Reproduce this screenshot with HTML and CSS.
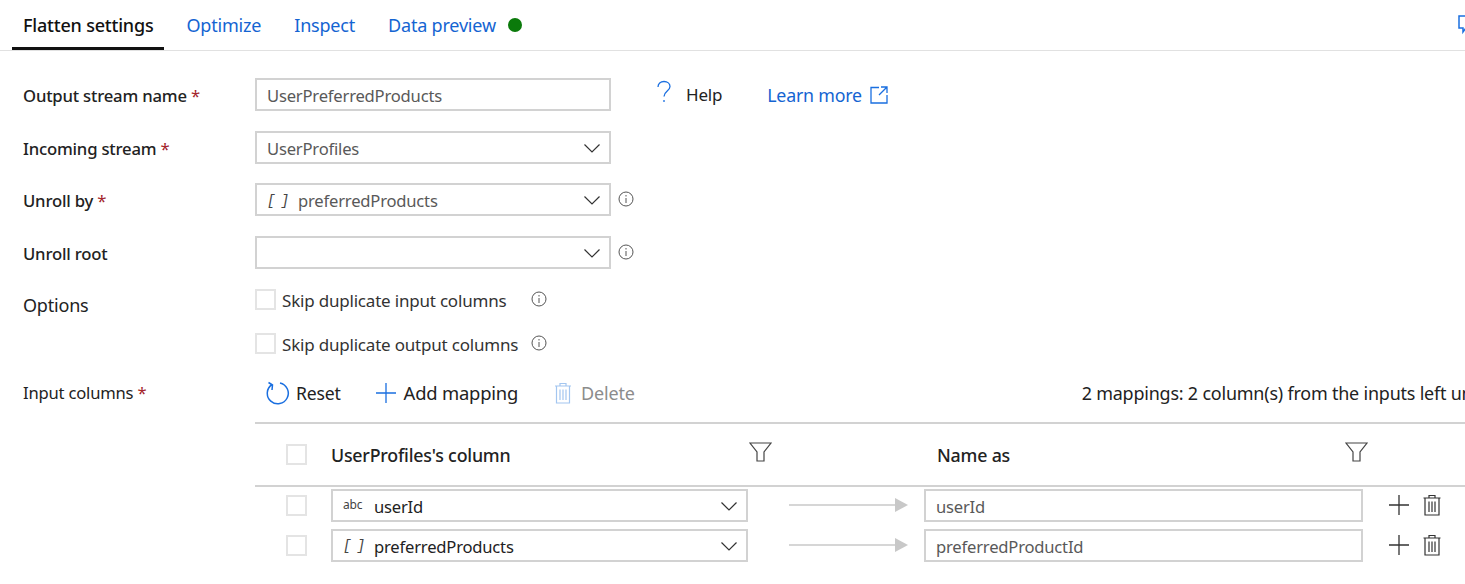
FILE: index.html
```html
<!DOCTYPE html>
<html>
<head>
	<title>Flatten settings</title>
	<link rel="stylesheet" href="styles.css">
</head>
<body>
<div class="tabs">
	<div class="tab active">Flatten settings</div>
	<div class="tab">Optimize</div>
	<div class="tab">Inspect</div>
	<div class="tab">Data preview <span class="dot"></span></div>
	<div class="feedback">
		<svg width="20" height="20" viewBox="0 0 20 20"><path d="M1 1H18V13H8L5 17V13H1Z" fill="none" stroke="#1a6fe0" stroke-width="1.5"/></svg>
	</div>
</div>

<div class="form">
	<div class="row">
		<div class="label bold">Output stream name <span class="req">*</span></div>
		<div class="field">UserPreferredProducts</div>
		<div class="help">
			<svg width="16" height="24" viewBox="0 0 16 24"><path d="M2 7C2 3.500 4.500 1.500 8 1.500S14 3.700 14 6.500C14 11 8 11 8 16.500M8 20V22" fill="none" stroke="#1a6fe0" stroke-width="1.300"/></svg>
			<span class="help-text">Help</span>
		</div>
		<div class="learn">Learn more
			<svg width="18" height="18" viewBox="0 0 18 18"><path d="M9 1.500H1V17H17V9M11 1H17V7M17 1L9 9" fill="none" stroke="#1a6fe0" stroke-width="1.300"/></svg>
		</div>
	</div>
	<div class="row">
		<div class="label bold">Incoming stream <span class="req">*</span></div>
		<div class="field select">UserProfiles
			<svg class="chev" width="16" height="9" viewBox="0 0 16 9"><path d="M.5 .5L8 8L15.500 .5" fill="none" stroke="#333" stroke-width="1.200"/></svg>
		</div>
	</div>
	<div class="row">
		<div class="label bold">Unroll by <span class="req">*</span></div>
		<div class="field select"><span class="arr">[ ]</span>preferredProducts
			<svg class="chev" width="16" height="9" viewBox="0 0 16 9"><path d="M.5 .5L8 8L15.500 .5" fill="none" stroke="#333" stroke-width="1.200"/></svg>
		</div>
		<svg class="info" width="16" height="16" viewBox="0 0 16 16"><circle cx="8" cy="8" r="7" fill="none" stroke="#555"/><path d="M8 7V12M8 4V5.500" stroke="#555"/></svg>
	</div>
	<div class="row">
		<div class="label bold">Unroll root</div>
		<div class="field select">
			<svg class="chev" width="16" height="9" viewBox="0 0 16 9"><path d="M.5 .5L8 8L15.500 .5" fill="none" stroke="#333" stroke-width="1.200"/></svg>
		</div>
		<svg class="info" width="16" height="16" viewBox="0 0 16 16"><circle cx="8" cy="8" r="7" fill="none" stroke="#555"/><path d="M8 7V12M8 4V5.500" stroke="#555"/></svg>
	</div>
	<div class="options">
		<div class="label">Options</div>
		<div class="checks">
			<div class="check-row">
				<span class="box"></span><span class="check-text">Skip duplicate input columns</span>
				<svg class="info-b" width="16" height="16" viewBox="0 0 16 16"><circle cx="8" cy="8" r="7" fill="none" stroke="#555"/><path d="M8 7V12M8 4V5.500" stroke="#555"/></svg>
			</div>
			<div class="check-row">
				<span class="box"></span><span class="check-text">Skip duplicate output columns</span>
				<svg class="info-c" width="16" height="16" viewBox="0 0 16 16"><circle cx="8" cy="8" r="7" fill="none" stroke="#555"/><path d="M8 7V12M8 4V5.500" stroke="#555"/></svg>
			</div>
		</div>
	</div>
	<div class="toolbar-row">
		<div class="label small">Input columns <span class="req">*</span></div>
		<div class="toolbar">
			<div class="tool reset">
				<svg width="24" height="24" viewBox="0 0 24 24"><path d="M6 3.500A10.500 10.500 0 1 0 14 2M2.500 1.500L6.500 4L6 9" fill="none" stroke="#1a6fe0" stroke-width="1.500"/></svg>
				Reset
			</div>
			<div class="tool add">
				<svg width="22" height="22" viewBox="0 0 22 22"><path d="M11 1V21M1 11H21" stroke="#1a6fe0" stroke-width="1.300"/></svg>
				Add mapping
			</div>
			<div class="tool del">
				<svg width="18" height="22" viewBox="0 0 18 22"><path d="M1 4H17M6 4V1.500H12V4M2.500 4V21H15.500V4M6 7.500V18M9 7.500V18M12 7.500V18" fill="none" stroke="#a3c6f0" stroke-width="1.200"/></svg>
				Delete
			</div>
			<div class="summary">2 mappings: 2 column(s) from the inputs left unmapped</div>
		</div>
	</div>
	<div class="table">
		<div class="thead">
			<span class="box cell-check"></span>
			<div class="th th-left bold">UserProfiles's column</div>
			<svg class="filter" width="23" height="20" viewBox="0 0 23 20"><path d="M1 1H22L15 10V19H8V10Z" fill="none" stroke="#444" stroke-width="1.200"/></svg>
			<div class="th th-right bold">Name as</div>
			<svg class="filter" width="23" height="20" viewBox="0 0 23 20"><path d="M1 1H22L15 10V19H8V10Z" fill="none" stroke="#444" stroke-width="1.200"/></svg>
		</div>
		<div class="trow first">
			<span class="box cell-check"></span>
			<div class="field select col-select"><span class="abc">abc</span>userId
				<svg class="chev" width="16" height="9" viewBox="0 0 16 9"><path d="M.5 .5L8 8L15.500 .5" fill="none" stroke="#333" stroke-width="1.200"/></svg>
			</div>
			<svg class="arrow" width="119" height="14" viewBox="0 0 119 14"><path d="M0 7H106" stroke="#c8c8c8" stroke-width="1.500"/><path d="M106 0L119 7L106 14Z" fill="#c8c8c8"/></svg>
			<div class="field col-input">userId</div>
			<svg class="plus" width="20" height="20" viewBox="0 0 20 20"><path d="M10 0V20M0 10H20" stroke="#333" stroke-width="1.300"/></svg>
			<svg class="trash" width="18" height="22" viewBox="0 0 18 22"><path d="M.5 4H17.500M6 4V1.500H12V4M2 4V21H16V4M6 7.500V18M9 7.500V18M12 7.500V18" fill="none" stroke="#333" stroke-width="1.200"/></svg>
		</div>
		<div class="trow">
			<span class="box cell-check"></span>
			<div class="field select col-select"><span class="arr dark">[ ]</span>preferredProducts
				<svg class="chev" width="16" height="9" viewBox="0 0 16 9"><path d="M.5 .5L8 8L15.500 .5" fill="none" stroke="#333" stroke-width="1.200"/></svg>
			</div>
			<svg class="arrow" width="119" height="14" viewBox="0 0 119 14"><path d="M0 7H106" stroke="#c8c8c8" stroke-width="1.500"/><path d="M106 0L119 7L106 14Z" fill="#c8c8c8"/></svg>
			<div class="field col-input">preferredProductId</div>
			<svg class="plus" width="20" height="20" viewBox="0 0 20 20"><path d="M10 0V20M0 10H20" stroke="#333" stroke-width="1.300"/></svg>
			<svg class="trash" width="18" height="22" viewBox="0 0 18 22"><path d="M.5 4H17.500M6 4V1.500H12V4M2 4V21H16V4M6 7.500V18M9 7.500V18M12 7.500V18" fill="none" stroke="#333" stroke-width="1.200"/></svg>
		</div>
	</div>
</div>
</body>
</html>
```

FILE: styles.css
```css
html, body{
	margin: 0;
	padding: 0;
	height: 584px;
	overflow: hidden;
	background: #fff;
}
body{
	width: 1465px;
	font-family: "Noto Sans", "Open Sans", sans-serif;
	font-size: 17px;
	color: #222;
	letter-spacing: -0.2px;
}
.bold{
	font-weight: 550;
	font-size: 16.7px;
	padding-top: 2px;
}
.req{
	color: #a4262c;
	font-weight: 400;
}

/* tabs */
.tabs{
	display: flex;
	height: 50px;
	padding-left: 12px;
	border-bottom: 1px solid #e1e1e1;
	font-size: 18px;
}
.tab{
	display: flex;
	align-items: center;
	height: 50px;
	box-sizing: border-box;
	padding: 0 11px 0;
	margin-right: 11px;
	color: #1464d2;
	white-space: pre;
}
.tab.active{
	color: #111;
	font-weight: 550;
	border-bottom: 3px solid #111;
	padding-top: 3px;
}
.dot{
	display: inline-block;
	width: 14px;
	height: 14px;
	margin-left: 8px;
	border-radius: 50%;
	background: #0b7a0b;
}
.feedback{
	margin-left: auto;
	width: 7px;
	height: 20px;
	margin-top: 15px;
	overflow: hidden;
}

/* form */
.form{
	padding-left: 23px;
}
.row{
	display: flex;
	align-items: center;
	height: 33px;
	margin-bottom: 19.7px;
}
.row:first-child{
	margin-top: 27px;
}
.label{
	width: 232px;
	flex: none;
}
.field{
	display: flex;
	align-items: center;
	box-sizing: border-box;
	width: 356px;
	height: 33px;
	padding: 2px 0 0 10px;
	border: 2px solid #d2d2d2;
	color: #595959;
	flex: none;
	font-size: 16.6px;
}
.select{
	position: relative;
}
.chev{
	position: absolute;
	right: 9px;
	top: 11px;
}
.arr{
	width: 31px;
	font-family: "Liberation Mono", monospace;
	font-style: italic;
	font-size: 14px;
	color: #444;
	flex: none;
	letter-spacing: -1.5px;
}
.info{
	margin-left: 7px;
	margin-top: -2px;
}
.help{
	display: flex;
	align-items: center;
	margin-left: 45px;
}
.help svg{
	margin-top: -6px;
}
.help-text{
	margin-left: 14px;
}
.learn{
	display: flex;
	align-items: center;
	gap: 8px;
	margin-left: 45px;
	color: #1464d2;
	font-size: 17.8px;
}

/* options */
.options{
	display: flex;
	margin-top: 1px;
}
.options .label{
	padding-top: 4px;
	font-size: 18px;
}
.check-row{
	display: flex;
	align-items: center;
	height: 22px;
	margin-bottom: 22px;
}
.box{
	display: block;
	width: 21px;
	height: 21px;
	box-sizing: border-box;
	border: 2px solid #e4e4e4;
	flex: none;
}
.check-text{
	margin-left: 6px;
	padding-top: 2px;
	color: #333;
}
.info-b{
	margin-left: 25px;
	margin-top: -2px;
}
.info-c{
	margin-left: 13px;
	margin-top: -2px;
}

/* toolbar */
.toolbar-row{
	display: flex;
	align-items: center;
	height: 28px;
	margin-top: 2px;
}
.toolbar-row .small{
	font-size: 16.6px;
}
.toolbar{
	display: flex;
	align-items: center;
	flex: 1;
	min-width: 0;
	padding-left: 11px;
	overflow: hidden;
	white-space: nowrap;
	font-size: 18px;
}
.tool{
	display: flex;
	align-items: center;
	gap: 7px;
	color: #222;
}
.reset{
	gap: 6px;
	font-size: 17.6px;
}
.add{
	margin-left: 34px;
	font-size: 18.4px;
}
.del{
	margin-left: 36px;
	gap: 9px;
	color: #8c8c8c;
}
.summary{
	margin-left: 447px;
	font-size: 17.95px;
}

/* mapping table */
.table{
	margin-left: 232px;
	margin-top: 15px;
	border-top: 2px solid #d2d2d2;
}
.thead{
	display: flex;
	align-items: center;
	height: 61px;
	border-bottom: 2px solid #d2d2d2;
}
.cell-check{
	margin-left: 31px;
}
.th.bold{
	flex: none;
	font-size: 17.8px;
}
.th-left{
	width: 418px;
	margin-left: 24px;
}
.th-right{
	width: 408px;
	margin-left: 165px;
}
.filter{
	margin-top: -4px;
}
.trow{
	display: flex;
	align-items: center;
	height: 33px;
	margin-bottom: 7px;
}
.trow.first{
	margin-top: 2px;
}
.col-select{
	width: 417px;
	margin-left: 24px;
	color: #222;
}
.abc{
	width: 31px;
	font-size: 12px;
	color: #444;
	flex: none;
	margin-top: -3px;
}
.dark{
	width: 31px;
}
.arrow{
	margin-left: 41px;
	flex: none;
}
.col-input{
	width: 439px;
	margin-left: 16px;
}
.plus{
	margin-left: 26px;
	flex: none;
}
.trash{
	margin-left: 14px;
	flex: none;
}
```
